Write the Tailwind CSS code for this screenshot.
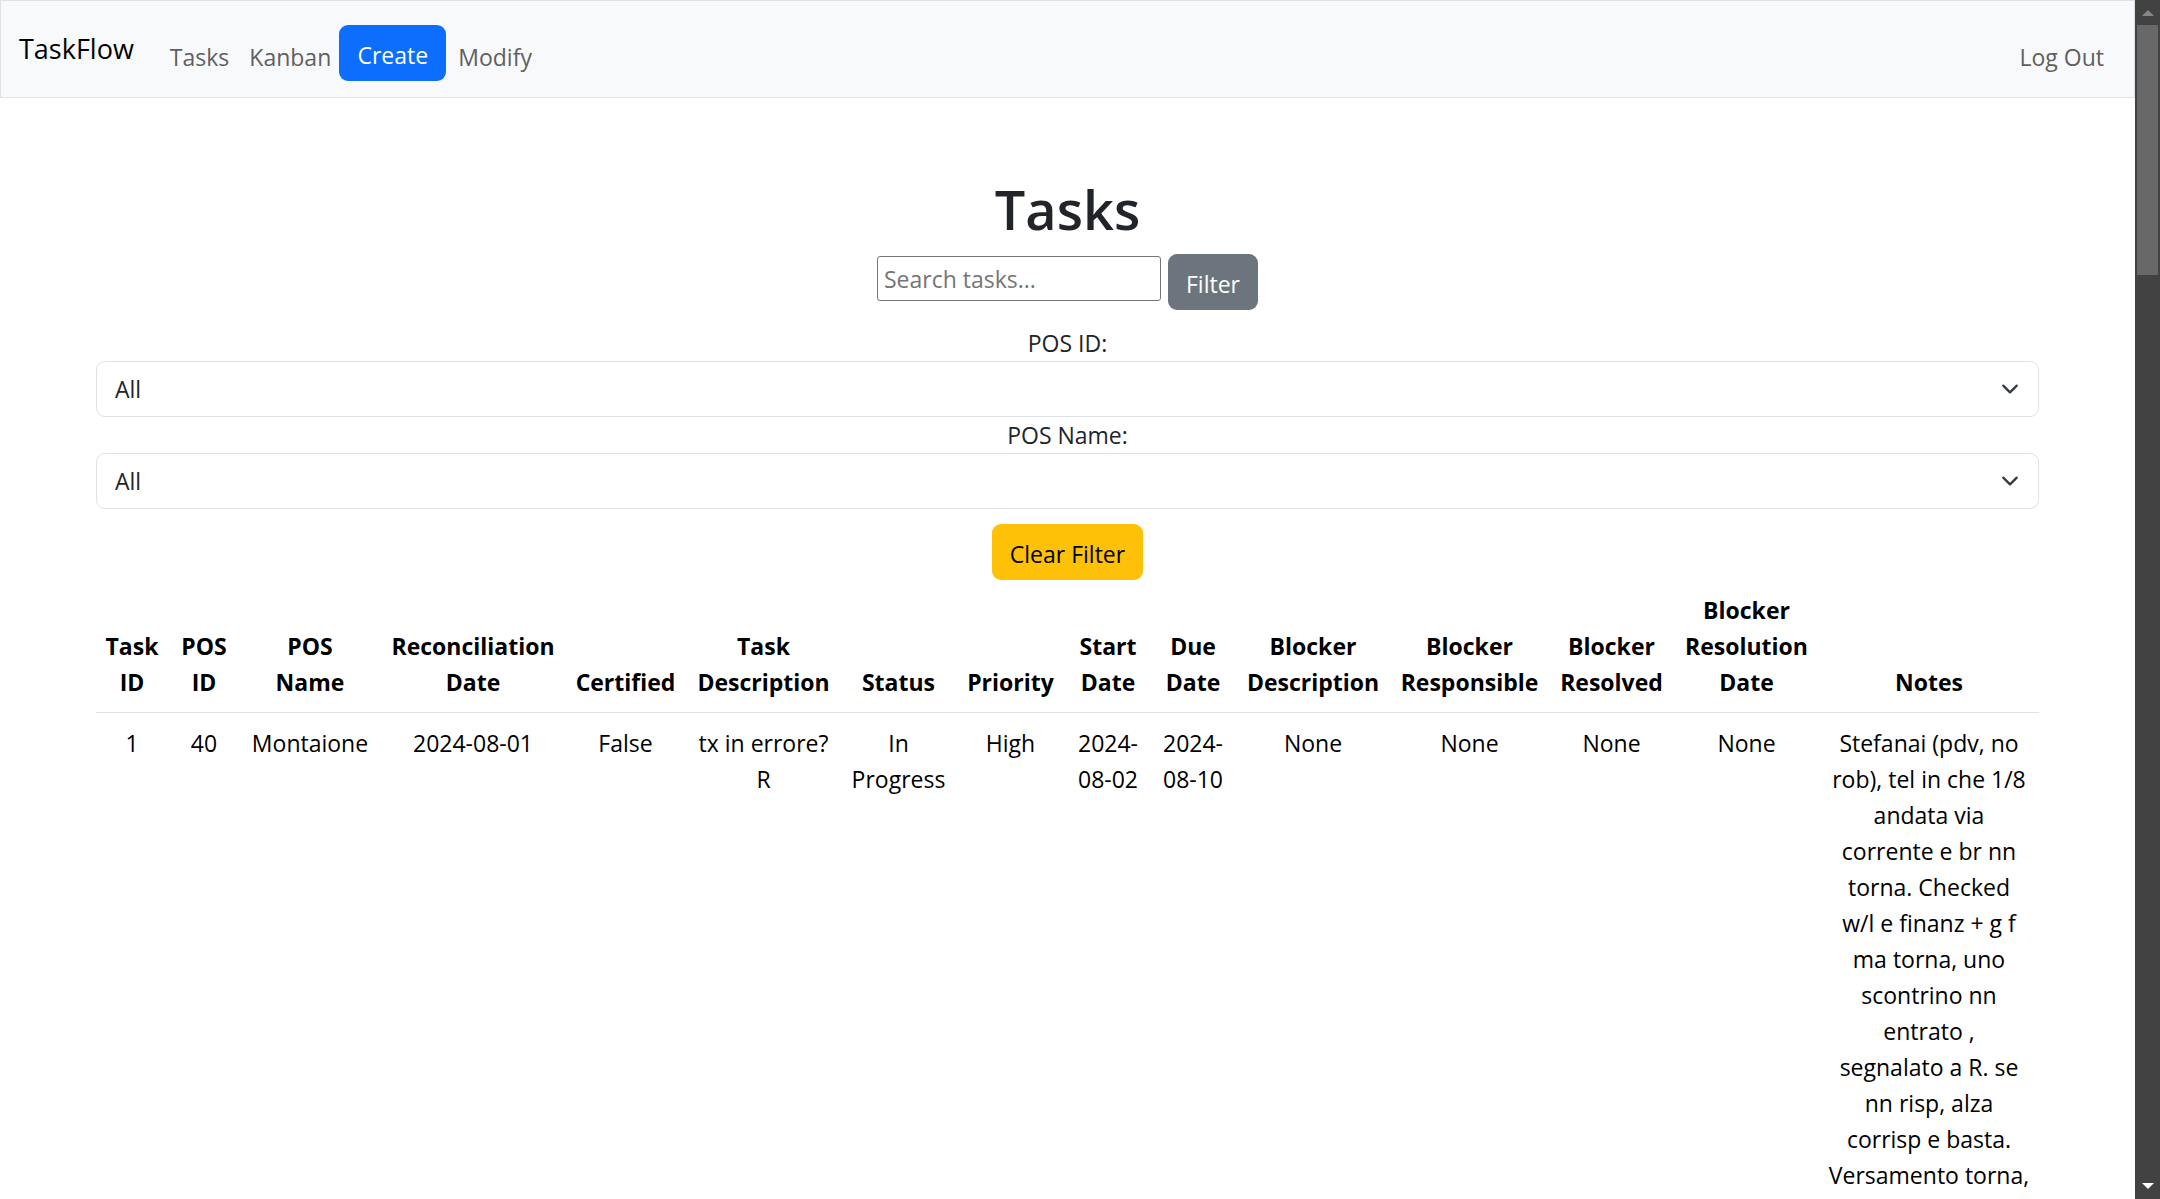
<!DOCTYPE html>
<html lang="en">
<head>
<meta charset="utf-8">
<meta name="viewport" content="width=device-width, initial-scale=1">
<title>TaskFlow</title>
<script src="https://cdn.jsdelivr.net/npm/@tailwindcss/browser@4"></script>
</head>
<body class="flex h-screen overflow-hidden bg-white font-['Open_Sans',sans-serif] text-[23px] leading-9 text-[#212529]">
  <div class="min-w-0 flex-1 overflow-hidden">
    <nav class="flex h-[98px] items-center border border-[#dee2e6] bg-[#f8f9fa] pl-[18px] pr-[30px]">
      <a href="#" class="mr-9 text-[27px] text-black">TaskFlow</a>
      <ul class="flex flex-1 items-center text-[#5f6061]">
        <li class="mr-5 pt-4"><a href="#">Tasks</a></li>
        <li class="mr-2 pt-4"><a href="#">Kanban</a></li>
        <li class="mr-3 pt-2"><a href="#" class="flex h-14 w-[107px] items-center justify-center rounded-[9px] bg-[#0d6efd] pt-1 text-white">Create</a></li>
        <li class="pt-4"><a href="#">Modify</a></li>
        <li class="ml-auto pt-4"><a href="#">Log Out</a></li>
      </ul>
    </nav>
    <main class="px-24 pt-[75px] text-center">
      <h1 class="text-[54px] font-semibold leading-[72px]">Tasks</h1>
      <form class="mt-[9px] flex flex-col items-center">
        <div class="mb-[15px] flex gap-[7px]">
          <input type="text" aria-label="Search tasks" placeholder="Search tasks..." class="mt-0.5 h-[45px] w-[284px] rounded-[3px] border border-[#767676] px-1.5 placeholder:text-[#757575]">
          <button type="button" class="h-14 w-[90px] rounded-[9px] bg-[#6c757d] pt-1 text-white">Filter</button>
        </div>
        <label for="pos-id">POS ID:</label>
        <div class="grid w-full items-center">
          <select id="pos-id" class="col-start-1 row-start-1 h-14 w-full appearance-none rounded-[9px] border border-[#dee2e6] bg-white px-[18px]"><option>All</option></select>
          <svg class="pointer-events-none col-start-1 row-start-1 mr-5 size-[18px] justify-self-end" viewBox="0 0 16 16" fill="none" stroke="#343a40" stroke-width="2" stroke-linecap="round" stroke-linejoin="round"><path d="m2 5 6 6 6-6"/></svg>
        </div>
        <label for="pos-name">POS Name:</label>
        <div class="grid w-full items-center">
          <select id="pos-name" class="col-start-1 row-start-1 h-14 w-full appearance-none rounded-[9px] border border-[#dee2e6] bg-white px-[18px]"><option>All</option></select>
          <svg class="pointer-events-none col-start-1 row-start-1 mr-5 size-[18px] justify-self-end" viewBox="0 0 16 16" fill="none" stroke="#343a40" stroke-width="2" stroke-linecap="round" stroke-linejoin="round"><path d="m2 5 6 6 6-6"/></svg>
        </div>
        <button type="reset" class="mt-[15px] h-14 w-[151px] rounded-[9px] bg-[#ffc107] pt-1 text-black">Clear Filter</button>
      </form>
      <table class="w-full table-fixed text-black">
        <colgroup>
          <col class="w-[72px]"><col class="w-[72px]"><col class="w-[140px]"><col class="w-[186px]"><col class="w-[119px]"><col class="w-[157px]"><col class="w-[113px]"><col class="w-[111px]"><col class="w-[84px]"><col class="w-[86px]"><col class="w-[154px]"><col class="w-[159px]"><col class="w-[125px]"><col class="w-[145px]"><col>
        </colgroup>
        <thead>
          <tr class="border-b border-[#dee2e6] align-bottom *:px-2 *:py-3 *:font-bold">
            <th>Task ID</th><th>POS ID</th><th>POS<br>Name</th><th>Reconciliation Date</th><th>Certified</th><th>Task Description</th><th>Status</th><th>Priority</th><th>Start Date</th><th>Due Date</th><th>Blocker Description</th><th>Blocker Responsible</th><th>Blocker Resolved</th><th>Blocker Resolution Date</th><th>Notes</th>
          </tr>
        </thead>
        <tbody>
          <tr class="align-top *:px-2 *:py-3">
            <td>1</td><td>40</td><td>Montaione</td><td>2024-08-01</td><td>False</td><td>tx in errore? R</td><td>In Progress</td><td>High</td><td>2024-08-02</td><td>2024-08-10</td><td>None</td><td>None</td><td>None</td><td>None</td><td>Stefanai (pdv, no<br>rob), tel in che 1/8<br>andata via<br>corrente e br nn<br>torna. Checked<br>w/l e finanz + g f<br>ma torna, uno<br>scontrino nn<br>entrato ,<br>segnalato a R. se<br>nn risp, alza<br>corrisp e basta.<br>Versamento torna,</td>
          </tr>
        </tbody>
      </table>
    </main>
  </div>
  <aside class="flex w-[25px] flex-col items-center bg-[#424242]" aria-hidden="true">
    <div class="flex h-[25px] items-center"><svg class="size-3" viewBox="0 0 12 12" fill="#868686"><path d="M6 3l6 6H0z"/></svg></div>
    <div class="h-[250px] w-[21px] bg-[#686868]"></div>
    <div class="mt-auto flex h-[27px] items-center"><svg class="size-3" viewBox="0 0 12 12" fill="#fff"><path d="M0 3h12L6 9z"/></svg></div>
  </aside>
</body>
</html>
